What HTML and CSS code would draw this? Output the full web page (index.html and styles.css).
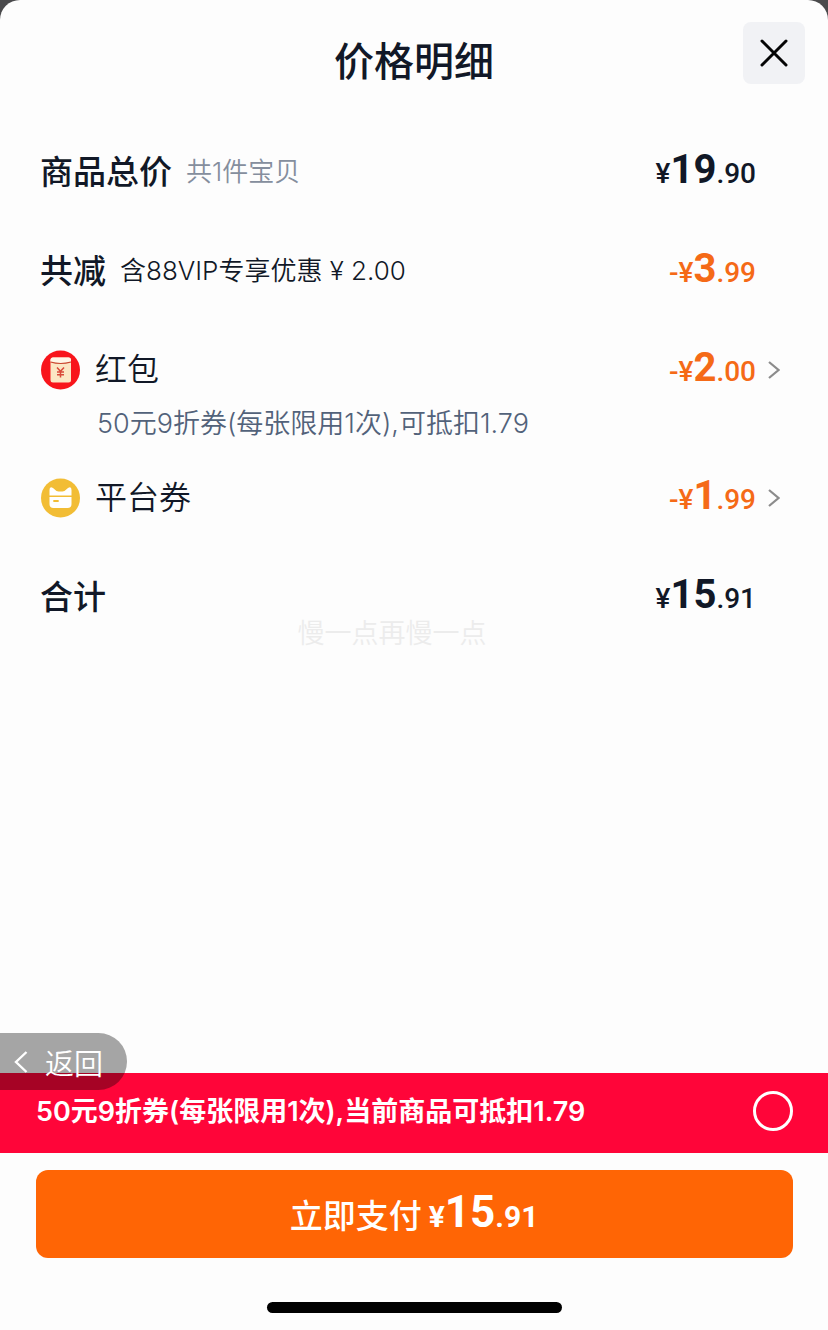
FILE: index.html
```
<!DOCTYPE html>
<html lang="zh-CN">
<head>
    <meta charset="UTF-8">
    <meta name="viewport" content="width=device-width, initial-scale=1.0">
    <title>价格明细</title>
    <link rel="stylesheet" href="styles.css">
</head>
<body>

<div class="sheet">
    <header class="header">
        <h1>价格明细</h1>
        <button type="button" class="close" aria-label="关闭">
            <svg width="30" height="30" viewBox="0 0 30 30" fill="none" stroke="#050505" stroke-width="3" stroke-linecap="round"><path d="M3 3l24 24M27 3L3 27"/></svg>
        </button>
    </header>

    <main class="details">
        <div class="row">
            <div class="name"><strong>商品总价</strong><span class="hint muted">共1件宝贝</span></div>
            <div class="price">¥<b>19</b><i>.</i>90</div>
        </div>
        <div class="row">
            <div class="name"><strong>共减</strong><span class="hint">含88VIP专享优惠 ¥ 2.00</span></div>
            <div class="price off">-¥<b>3</b><i>.</i>99</div>
        </div>
        <div class="row with-note">
            <div class="name">
                <svg class="icon" width="40" height="40" viewBox="0 0 40 40">
                    <circle cx="20.500" cy="20" r="19.500" fill="#f8151b"/>
                    <rect x="10.500" y="7.500" width="20.500" height="25" rx="2.500" fill="#fbe6c4"/>
                    <path d="M10.500 10q0-2.500 2.500-2.500h15.500q2.500 0 2.500 2.500v1.500q-10.200 3-20.500 0z" fill="#fff6e8"/>
                    <path d="M10.500 12q10.200 3 20.500 0" fill="none" stroke="#c9462f" stroke-width="1.200"/>
                    <path d="M17 17.500l3.500 3.800 3.500-3.800M20.500 21.300v6.200M17 22h7M17 24.700h7" fill="none" stroke="#d9493a" stroke-width="1.500"/>
                </svg>
                <span>红包</span>
            </div>
            <div class="price off">-¥<b>2</b><i>.</i>00</div>
            <button type="button" class="more" aria-label="选择红包">
                <svg width="12" height="20" viewBox="0 0 12 20" fill="none" stroke="#8c8c8c" stroke-width="2.200"><path d="M1 2l9.500 8L1 18"/></svg>
            </button>
        </div>
        <p class="note">50元9折券(每张限用1次),可抵扣1.79</p>
        <div class="row">
            <div class="name">
                <svg class="icon" width="40" height="40" viewBox="0 0 40 40">
                    <circle cx="20.500" cy="20" r="19.500" fill="#f2bd35"/>
                    <path d="M9.500 17.500V12q0-4 3.500-2l3.500 3q4 1 8 0l3.500-3q3.500-2 3.500 2v5.500z" fill="#fff"/>
                    <path d="M9.500 19h22v7q0 4-4 4h-14q-4 0-4-4z" fill="#fff"/>
                    <path d="M14 23h4" stroke="#f2bd35" stroke-width="1.800" stroke-linecap="round"/>
                </svg>
                <span>平台券</span>
            </div>
            <div class="price off">-¥<b>1</b><i>.</i>99</div>
            <button type="button" class="more" aria-label="选择平台券">
                <svg width="12" height="20" viewBox="0 0 12 20" fill="none" stroke="#8c8c8c" stroke-width="2.200"><path d="M1 2l9.500 8L1 18"/></svg>
            </button>
        </div>
        <div class="row total">
            <div class="name"><strong>合计</strong></div>
            <div class="price">¥<b>15</b><i>.</i>91</div>
        </div>
        <p class="watermark">慢一点再慢一点</p>
    </main>

    <footer>
        <div class="coupon">
            <button type="button" class="back">
                <svg width="14" height="22" viewBox="0 0 14 22" fill="none" stroke="#fff" stroke-width="2.400"><path d="M12.500 1L2 11l10.500 10"/></svg>
                返回
            </button>
            <label for="useCoupon">50元9折券(每张限用1次),当前商品可抵扣1.79</label>
            <input type="checkbox" id="useCoupon">
        </div>
        <button type="button" class="pay">立即支付<span class="price">¥<b>15</b><i>.</i>91</span></button>
        <div class="home-bar"></div>
    </footer>
</div>

</body>
</html>
```
FILE: styles.css
```
* {
    box-sizing: border-box;
}

body {
    margin: 0;
    background: #4a4a4c;
    color: #111827;
    font-family: Inter, "Noto Sans CJK SC", sans-serif;
    font-weight: 350;
}

button {
    border: 0;
    padding: 0;
    font-family: inherit;
    cursor: pointer;
}

svg {
    display: block;
}

.sheet {
    display: flex;
    flex-direction: column;
    min-height: 100vh;
    background: #fdfdfd;
    border-radius: 20px 20px 0 0;
}

/* header */
.header {
    display: grid;
    grid-template-columns: 62px 1fr 62px;
    height: 84px;
    padding: 22px 23px 0;
}

.header h1 {
    grid-column: 2;
    margin: 0;
    padding-top: 10px;
    font-size: 40px;
    line-height: 60px;
    font-weight: 500;
    text-align: center;
}

.close {
    display: flex;
    align-items: center;
    justify-content: center;
    height: 62px;
    border-radius: 8px;
    background: #f1f2f5;
}

/* price rows */
.details {
    flex: 1;
    padding: 66px 48px 0 40px;
}

.row {
    display: grid;
    grid-template-columns: 1fr auto 24px;
    align-items: center;
    height: 40px;
    margin-bottom: 59px;
}

.row.with-note,
.row.total {
    margin-bottom: 0;
}

.name {
    display: flex;
    align-items: center;
    font-size: 32px;
    line-height: 40px;
}

.name strong {
    margin-right: 14px;
    font-size: 33px;
    font-weight: 500;
}

.icon {
    margin-right: 15px;
}

.hint {
    font-size: 26px;
}

.muted {
    color: #858e9d;
}

.price {
    font-family: Roboto, sans-serif;
    font-size: 28px;
    line-height: 40px;
    font-weight: 500;
}

.price b {
    font-size: 40px;
    font-weight: 700;
}

.price i {
    font-style: normal;
}

.off {
    color: #f56a17;
}

.more {
    display: flex;
    justify-content: flex-end;
    background: none;
}

.note {
    margin: 17px 0 33px;
    padding-left: 57px;
    color: #52627a;
    font-size: 27px;
    line-height: 38px;
}

.watermark {
    margin: 3px 0 0;
    padding-right: 36px;
    color: #ececec;
    font-size: 27px;
    line-height: 32px;
    text-align: center;
}

/* bottom area */
.coupon {
    position: relative;
    display: flex;
    align-items: center;
    justify-content: space-between;
    height: 80px;
    padding: 0 35px 4px 36px;
    background: #ff0539;
    color: #fff;
    font-size: 27px;
    font-weight: 600;
}

.coupon label {
    padding-bottom: 4px;
}

.coupon input {
    appearance: none;
    width: 40px;
    height: 40px;
    margin: 0;
    border: 3px solid #fff;
    border-radius: 50%;
}

.coupon input:checked {
    background: #fff;
}

/* floating button over the edge of the coupon bar */
.back {
    position: absolute;
    left: 0;
    top: -40px;
    display: flex;
    align-items: center;
    gap: 17px;
    width: 127px;
    height: 57px;
    padding-left: 14px;
    border-radius: 0 29px 29px 0;
    background: rgba(0, 0, 0, 0.35);
    color: #fff;
    font-size: 29px;
    font-weight: 350;
}

.pay {
    display: flex;
    align-items: center;
    justify-content: center;
    gap: 7px;
    width: calc(100% - 71px);
    height: 88px;
    margin: 17px auto 44px;
    border-radius: 12px;
    background: #ff6505;
    color: #fff;
    font-size: 33px;
    font-weight: 500;
}

.pay .price {
    font-size: 30px;
    font-weight: 700;
}

.pay b {
    font-size: 44px;
}

.home-bar {
    width: 295px;
    height: 11px;
    margin: 0 auto 17px;
    border-radius: 6px;
    background: #000;
}
```
